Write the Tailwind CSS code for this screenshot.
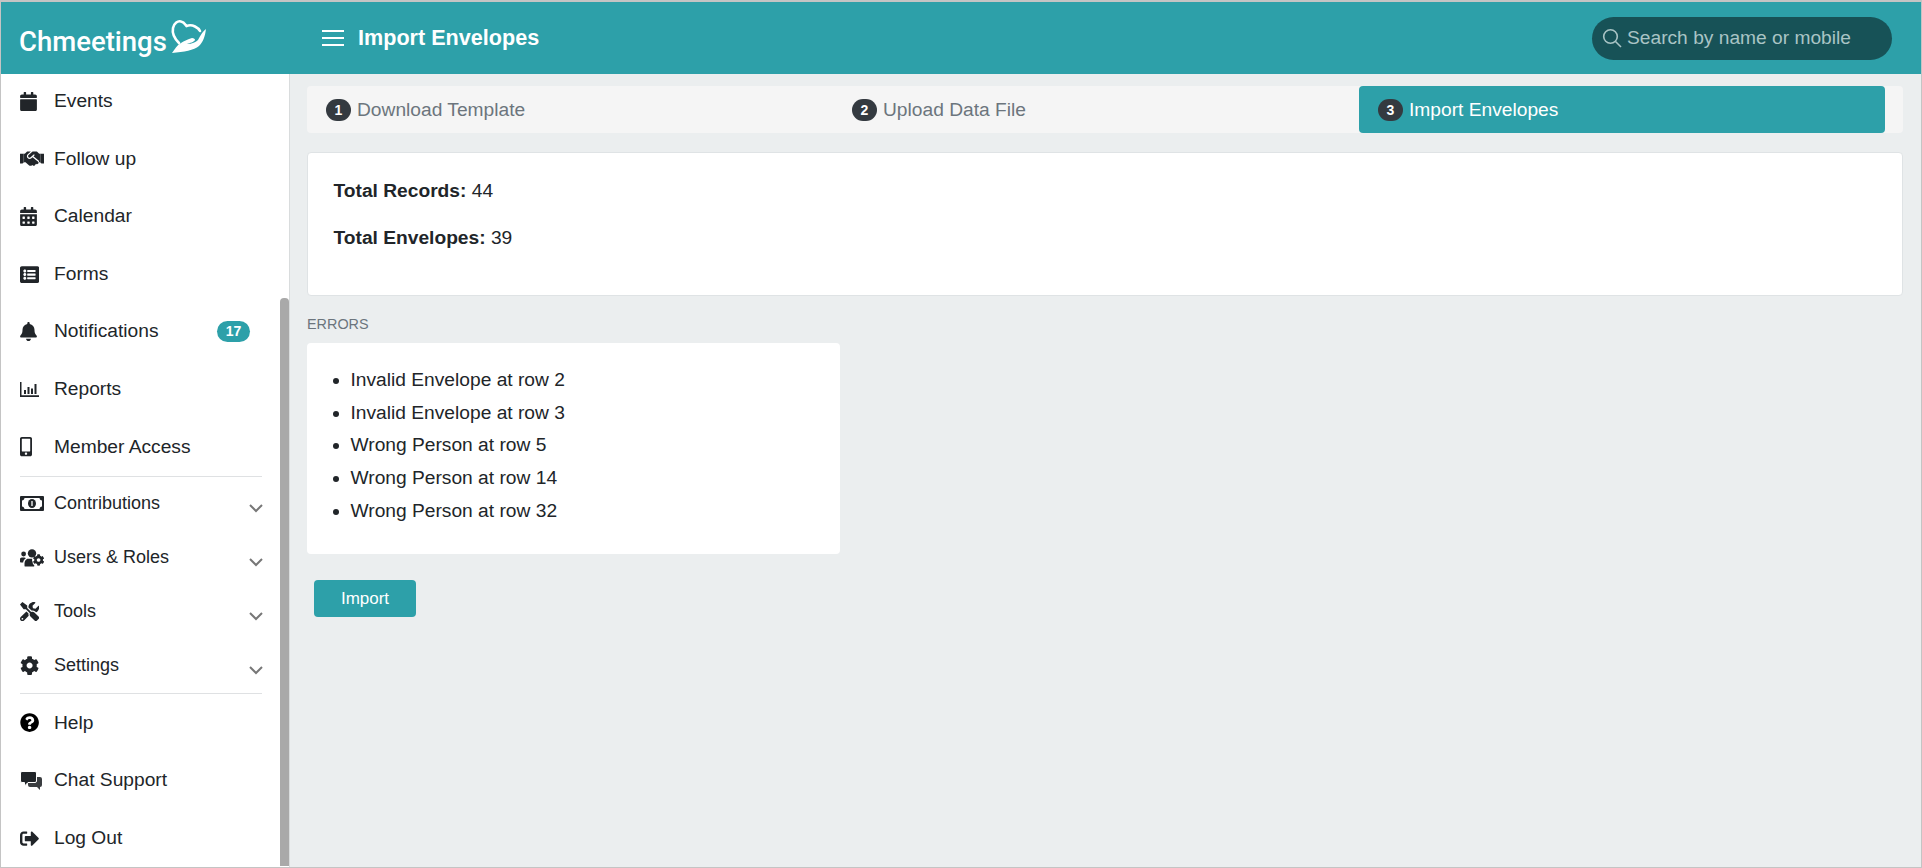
<!DOCTYPE html>
<html lang="en">
<head>
    <meta charset="UTF-8">
    <title>Import Envelopes</title>
    <script src="https://cdn.jsdelivr.net/npm/@tailwindcss/browser@4"></script>
</head>
<body class="h-[868px] overflow-hidden bg-[#ebeeef] font-['Liberation_Sans',Arial,sans-serif] text-[19.2px] text-[#212529]">
<div class="flex h-[868px] flex-col border-x border-b border-t-2 border-x-[#c4c4c4] border-b-[#c4c4c4] border-t-[#c4c4c4]">

    <!-- top bar -->
    <header class="flex h-[72px] shrink-0 items-center bg-[#2da0a9] text-white">
        <div class="flex w-[321px] shrink-0 items-center pl-[18px]">
            <span class="mt-[7px] font-['Roboto',sans-serif] text-[27.5px] font-medium">Chmeetings</span>
            <svg class="ml-[3px] mt-[-2px] h-[38px] w-[38px]" viewBox="0 0 38 38" fill="none">
                <path d="M9 25C4 20 2 15 3 10 4 5 8 2.500 11 3.500 14 4 15 6 16.500 8 19 7 22 7 25 8.500 27 9.500 29 11 30 13" stroke="#fff" stroke-width="2.6" stroke-linecap="round"/>
                <path d="M36 11C35 19 33 24 29 28 24 32 14 34 2 35 5 31 7 27 11 25 14 23 18 21 22 20 24 20 25 21 25 22 24 24 20 25 17 26 22 26 26 24 28 22 30 19 31 15 36 11z" fill="#fff"/>
            </svg>
        </div>
        <svg class="h-[18px] w-[22px]" viewBox="0 0 22 18" fill="none" stroke="#fff" stroke-width="2"><path d="M0 2h22M0 9h22M0 16h22"/></svg>
        <h1 class="ml-[14px] text-[21.6px] font-bold">Import Envelopes</h1>
        <div class="ml-auto mr-[29px] flex h-[43px] w-[300px] items-center rounded-full bg-[#175257] pl-[10px] text-[19.2px] text-[#a9c4c5]">
            <svg class="h-[20px] w-[20px]" viewBox="0 0 20 20" fill="none" stroke="#a9c4c5" stroke-width="1.6"><circle cx="8.5" cy="8.5" r="6.8"/><path d="M13.5 13.5l5.5 5.5"/></svg>
            <span class="ml-[5px]">Search by name or mobile</span>
        </div>
    </header>

    <div class="flex min-h-0 flex-1">
        <!-- sidebar -->
        <aside class="relative w-[289px] shrink-0 overflow-hidden border-r border-[#d9dcdd] bg-white">
            <nav class="-mt-[1.4px]">
                <a class="flex h-[57.6px] items-center pl-[19px]"><span class="flex w-[34px] shrink-0"><svg class="h-[19.2px] w-[17px]" viewBox="0 0 448 512" fill="#212529"><path d="M12 192h424c6.6 0 12 5.4 12 12v260c0 26.5-21.5 48-48 48H48c-26.5 0-48-21.5-48-48V204c0-6.6 5.4-12 12-12zm436-44v-36c0-26.5-21.5-48-48-48h-48V12c0-6.6-5.4-12-12-12h-40c-6.6 0-12 5.4-12 12v52H160V12c0-6.6-5.4-12-12-12h-40c-6.6 0-12 5.4-12 12v52H48C21.5 64 0 85.5 0 112v36c0 6.6 5.4 12 12 12h424c6.6 0 12-5.4 12-12z"/></svg></span>Events</a>
                <a class="flex h-[57.6px] items-center pl-[19px]"><span class="flex w-[34px] shrink-0"><svg class="h-[19.2px] w-[24px]" viewBox="0 0 640 512" fill="#212529"><path d="M96 128h36v224H96zM508 128h36v224h-36z"/><path d="M434.7 64h-85.9c-8 0-15.7 3-21.6 8.4l-98.3 90c-.1.1-.2.3-.3.4-16.6 15.6-16.3 40.5-2.1 56 12.7 13.9 39.4 17.6 56.1 2.7.1-.1.3-.1.4-.2l79.9-73.2c6.5-5.9 16.7-5.5 22.6 1 6 6.5 5.5 16.6-1 22.6l-26.1 23.9L504 313.8c2.9 2.4 5.5 5 7.9 7.7V128l-54.6-54.6c-5.9-6-14.1-9.4-22.6-9.4zM544 128.2v223.9c0 17.7 14.3 32 32 32h64V128.2h-96zM0 384h64c17.7 0 32-14.3 32-32V128.2H0V384zm483.9-45.300L334.6 217.5l-30 27.5c-29.7 27.1-75.2 24.5-101.7-4.4-26.9-29.4-24.8-74.9 4.4-101.7L289.1 64h-83.8c-8.5 0-16.6 3.4-22.6 9.4L128 128v223.9h18.3l90.5 81.9c27.4 22.3 67.7 18.1 90-9.3l.2-.2 17.9 15.5c15.9 13 39.4 10.5 52.3-5.4l31.4-38.6 5.4 4.4c13.7 11.1 33.9 9.1 45-4.7l9.5-11.7c11.2-13.8 9.1-33.9-4.6-45.1z"/></svg></span>Follow up</a>
                <a class="flex h-[57.6px] items-center pl-[19px]"><span class="flex w-[34px] shrink-0"><svg class="h-[19.2px] w-[17px]" viewBox="0 0 448 512" fill="#212529"><path d="M0 464c0 26.5 21.5 48 48 48h352c26.5 0 48-21.5 48-48V192H0v272zm320-196c0-6.6 5.4-12 12-12h40c6.6 0 12 5.4 12 12v40c0 6.6-5.4 12-12 12h-40c-6.6 0-12-5.4-12-12v-40zm0 128c0-6.6 5.4-12 12-12h40c6.6 0 12 5.4 12 12v40c0 6.6-5.4 12-12 12h-40c-6.6 0-12-5.4-12-12v-40zM192 268c0-6.6 5.4-12 12-12h40c6.6 0 12 5.4 12 12v40c0 6.6-5.4 12-12 12h-40c-6.6 0-12-5.4-12-12v-40zm0 128c0-6.6 5.4-12 12-12h40c6.6 0 12 5.4 12 12v40c0 6.6-5.4 12-12 12h-40c-6.6 0-12-5.4-12-12v-40zM64 268c0-6.6 5.4-12 12-12h40c6.6 0 12 5.4 12 12v40c0 6.6-5.4 12-12 12H76c-6.6 0-12-5.4-12-12v-40zm0 128c0-6.6 5.4-12 12-12h40c6.6 0 12 5.4 12 12v40c0 6.6-5.4 12-12 12H76c-6.6 0-12-5.4-12-12v-40zM400 64h-48V16c0-8.8-7.2-16-16-16h-32c-8.8 0-16 7.2-16 16v48H160V16c0-8.8-7.2-16-16-16h-32c-8.8 0-16 7.2-16 16v48H48C21.5 64 0 85.5 0 112v48h448v-48c0-26.5-21.5-48-48-48z"/></svg></span>Calendar</a>
                <a class="flex h-[57.6px] items-center pl-[19px]"><span class="flex w-[34px] shrink-0"><svg class="h-[19.2px] w-[19.2px]" viewBox="0 0 512 512" fill="#212529"><path d="M464 480H48c-26.51 0-48-21.49-48-48V80c0-26.51 21.49-48 48-48h416c26.51 0 48 21.49 48 48v352c0 26.51-21.49 48-48 48zM128 120c-22.091 0-40 17.909-40 40s17.909 40 40 40 40-17.909 40-40-17.909-40-40-40zm0 96c-22.091 0-40 17.909-40 40s17.909 40 40 40 40-17.909 40-40-17.909-40-40-40zm0 96c-22.091 0-40 17.909-40 40s17.909 40 40 40 40-17.909 40-40-17.909-40-40-40zm288-136v-32c0-6.627-5.373-12-12-12H204c-6.627 0-12 5.373-12 12v32c0 6.627 5.373 12 12 12h200c6.627 0 12-5.373 12-12zm0 96v-32c0-6.627-5.373-12-12-12H204c-6.627 0-12 5.373-12 12v32c0 6.627 5.373 12 12 12h200c6.627 0 12-5.373 12-12zm0 96v-32c0-6.627-5.373-12-12-12H204c-6.627 0-12 5.373-12 12v32c0 6.627 5.373 12 12 12h200c6.627 0 12-5.373 12-12z"/></svg></span>Forms</a>
                <a class="flex h-[57.6px] items-center pl-[19px]"><span class="flex w-[34px] shrink-0"><svg class="h-[19.2px] w-[17px]" viewBox="0 0 448 512" fill="#212529"><path d="M224 512c35.32 0 63.97-28.65 63.97-64H160.03c0 35.35 28.65 64 63.97 64zm215.39-149.71c-19.32-20.76-55.47-51.99-55.47-154.29 0-77.7-54.48-139.9-127.94-155.16V32c0-17.67-14.32-32-31.98-32s-31.98 14.33-31.98 32v20.84C118.56 68.1 64.08 130.3 64.08 208c0 102.3-36.15 133.53-55.47 154.29-6 6.45-8.66 14.16-8.61 21.71.11 16.4 12.98 32 32.1 32h383.8c19.12 0 32-15.6 32.1-32 .05-7.55-2.61-15.27-8.61-21.71z"/></svg></span><span class="flex-1">Notifications</span><span class="mr-[39px] flex h-[21px] w-[33px] items-center justify-center rounded-full bg-[#2da0a9] text-[14px] font-bold text-white">17</span></a>
                <a class="flex h-[57.6px] items-center pl-[19px]"><span class="flex w-[34px] shrink-0"><svg class="h-[15px] w-[19px]" viewBox="0 0 19 15" fill="#212529"><path d="M0 0h1.5v13.3H19V15H0zM4 8h2v4H4zM7.500 5h2v7h-2zM11 6.500h2V12h-2zM14.500 2h2v10h-2z"/></svg></span>Reports</a>
                <a class="flex h-[57.6px] items-center pl-[19px]"><span class="flex w-[34px] shrink-0"><svg class="h-[19.2px] w-[12px]" viewBox="0 0 320 512" fill="#212529"><path d="M272 0H48C21.5 0 0 21.5 0 48v416c0 26.5 21.5 48 48 48h224c26.5 0 48-21.5 48-48V48c0-26.5-21.5-48-48-48zM160 480c-17.7 0-32-14.3-32-32s14.3-32 32-32 32 14.3 32 32-14.3 32-32 32zm112-108c0 6.6-5.4 12-12 12H60c-6.6 0-12-5.4-12-12V60c0-6.6 5.4-12 12-12h200c6.6 0 12 5.4 12 12v312z"/></svg></span>Member Access</a>

                <div class="ml-[19px] mr-[27px] h-px bg-[#dfe1e3]"></div>

                <a class="-mt-[0.6px] flex h-[54px] items-center pl-[19px] text-[18px]"><span class="flex w-[34px] shrink-0"><svg class="h-[15px] w-[24px]" viewBox="0 0 24 15"><path fill="#212529" d="M1 0h22a1 1 0 0 1 1 1v13a1 1 0 0 1-1 1H1a1 1 0 0 1-1-1V1a1 1 0 0 1 1-1z"/><path fill="#fff" d="M4.500 2h15c.3 1.500 1 2.200 2.500 2.500v6c-1.500.3-2.200 1-2.500 2.500h-15c-.3-1.500-1-2.200-2.500-2.500v-6C3.500 4.200 4.200 3.500 4.500 2z"/><ellipse cx="12" cy="7.500" rx="4" ry="4.500" fill="#212529"/><path d="M12 5v5" stroke="#fff" stroke-width="1.300"/></svg></span><span class="flex-1">Contributions</span><svg class="mr-[26px] mt-[10px] h-[9px] w-[14px]" viewBox="0 0 14 9" fill="none" stroke="#777" stroke-width="2"><path d="M1 1l6 6 6-6"/></svg></a>
                <a class="flex h-[54px] items-center pl-[19px] text-[18px]"><span class="flex w-[34px] shrink-0"><svg class="h-[19.2px] w-[24px]" viewBox="0 0 640 512" fill="#212529"><path d="M610.500 341.300c2.600-14.100 2.600-28.500 0-42.600l25.800-14.900c3-1.700 4.300-5.200 3.300-8.500-6.700-21.600-18.200-41.200-33.200-57.400-2.300-2.500-6-3.100-9-1.400l-25.800 14.900c-10.900-9.300-23.400-16.500-36.900-21.300v-29.800c0-3.400-2.400-6.400-5.700-7.100-22.300-5-45-4.800-66.200 0-3.300.7-5.700 3.700-5.700 7.100v29.800c-13.500 4.800-26 12-36.900 21.300l-25.800-14.900c-2.900-1.700-6.700-1.100-9 1.400-15 16.200-26.500 35.800-33.200 57.400-1 3.300.4 6.800 3.300 8.500l25.800 14.900c-2.600 14.100-2.600 28.500 0 42.600l-25.800 14.900c-3 1.700-4.300 5.200-3.300 8.500 6.700 21.600 18.200 41.100 33.200 57.400 2.300 2.500 6 3.100 9 1.400l25.800-14.900c10.900 9.300 23.400 16.500 36.900 21.300v29.800c0 3.400 2.400 6.400 5.700 7.100 22.300 5 45 4.800 66.200 0 3.300-.7 5.700-3.700 5.700-7.100v-29.800c13.500-4.800 26-12 36.900-21.300l25.800 14.900c2.900 1.700 6.700 1.100 9-1.400 15-16.200 26.500-35.800 33.200-57.400 1-3.300-.4-6.800-3.300-8.500l-25.800-14.900zM496 368.500c-26.800 0-48.500-21.800-48.500-48.500s21.800-48.500 48.500-48.500 48.500 21.800 48.500 48.500-21.700 48.500-48.500 48.500z"/><circle cx="96" cy="160" r="64"/><circle cx="320" cy="144" r="112"/><path d="M48 256h64c18 0 34 7 46 19-40 22-68 62-74 109H20c-11 0-20-9-20-20v-60c0-26 22-48 48-48zM212 288h116c-14 36-6 62 10 84-4 34 8 60 42 88v20c0 10-8 16-16 16H144c-14 0-24-10-24-24v-40c0-80 42-144 92-144z"/></svg></span><span class="flex-1">Users &amp; Roles</span><svg class="mr-[26px] mt-[10px] h-[9px] w-[14px]" viewBox="0 0 14 9" fill="none" stroke="#777" stroke-width="2"><path d="M1 1l6 6 6-6"/></svg></a>
                <a class="flex h-[54px] items-center pl-[19px] text-[18px]"><span class="flex w-[34px] shrink-0"><svg class="h-[19.2px] w-[19.2px]" viewBox="0 0 512 512" fill="#212529"><path d="M501.100 395.700L384 278.600c-23.100-23.100-57.600-27.600-85.400-13.900L192 158.100V96L64 0 0 64l96 128h62.100l106.600 106.600c-13.600 27.800-9.200 62.300 13.900 85.400l117.100 117.100c14.600 14.600 38.200 14.600 52.700 0l52.700-52.700c14.500-14.600 14.500-38.200 0-52.700zM331.700 225c28.300 0 54.900 11 74.900 31l19.400 19.400c15.800-6.900 30.800-16.500 43.800-29.500 37.100-37.100 49.700-89.300 37.900-136.700-2.200-9-13.500-12.100-20.100-5.500l-74.400 74.400-67.900-11.300L334 98.900l74.400-74.400c6.600-6.600 3.400-17.900-5.700-20.200-47.400-11.700-99.600.9-136.600 37.900-28.500 28.500-41.900 66.100-41.200 103.600l82.100 82.100c8.100-1.900 16.500-2.900 24.700-2.900zm-103.900 82l-56.700-56.700L18.700 402.800c-25 25-25 65.500 0 90.500s65.500 25 90.500 0l123.600-123.600c-7.600-19.900-9.900-41.600-5-62.700zM64 472c-13.200 0-24-10.800-24-24 0-13.300 10.700-24 24-24s24 10.700 24 24c0 13.200-10.700 24-24 24z"/></svg></span><span class="flex-1">Tools</span><svg class="mr-[26px] mt-[10px] h-[9px] w-[14px]" viewBox="0 0 14 9" fill="none" stroke="#777" stroke-width="2"><path d="M1 1l6 6 6-6"/></svg></a>
                <a class="flex h-[54px] items-center pl-[19px] text-[18px]"><span class="flex w-[34px] shrink-0"><svg class="h-[19.2px] w-[19.2px]" viewBox="0 0 512 512" fill="#212529"><path d="M487.400 315.700l-42.600-24.600c4.300-23.200 4.300-47 0-70.200l42.600-24.600c4.900-2.800 7.100-8.600 5.500-14-11.100-35.600-30-67.800-54.700-94.600-3.800-4.100-10-5.100-14.800-2.300L380.800 110c-17.900-15.400-38.500-27.300-60.800-35.100V25.800c0-5.600-3.900-10.500-9.400-11.700-36.700-8.200-74.300-7.800-109.200 0-5.500 1.200-9.400 6.100-9.400 11.700V75c-22.200 7.900-42.800 19.800-60.800 35.100L88.700 85.500c-4.900-2.800-11-1.900-14.800 2.300-24.700 26.700-43.600 58.900-54.700 94.600-1.700 5.400.6 11.200 5.500 14L67.300 221c-4.300 23.200-4.300 47 0 70.200l-42.600 24.600c-4.900 2.800-7.100 8.600-5.500 14 11.100 35.600 30 67.800 54.700 94.600 3.800 4.100 10 5.100 14.800 2.300l42.600-24.600c17.900 15.400 38.500 27.300 60.800 35.100v49.200c0 5.600 3.900 10.500 9.400 11.700 36.700 8.200 74.300 7.800 109.200 0 5.500-1.200 9.400-6.100 9.400-11.700v-49.200c22.200-7.900 42.800-19.800 60.800-35.100l42.600 24.600c4.900 2.800 11 1.900 14.800-2.300 24.700-26.700 43.600-58.900 54.700-94.600 1.500-5.500-.7-11.300-5.600-14.100zM256 336c-44.100 0-80-35.900-80-80s35.900-80 80-80 80 35.900 80 80-35.900 80-80 80z"/></svg></span><span class="flex-1">Settings</span><svg class="mr-[26px] mt-[10px] h-[9px] w-[14px]" viewBox="0 0 14 9" fill="none" stroke="#777" stroke-width="2"><path d="M1 1l6 6 6-6"/></svg></a>

                <div class="ml-[19px] mr-[27px] mt-[1px] h-px bg-[#dfe1e3]"></div>

                <a class="flex h-[57.6px] items-center pl-[19px]"><span class="flex w-[34px] shrink-0"><svg class="h-[19.2px] w-[19.2px]" viewBox="0 0 512 512" fill="#000"><path d="M504 256c0 136.997-111.043 248-248 248S8 392.997 8 256C8 119.083 119.043 8 256 8s248 111.083 248 248zM262.655 90c-54.497 0-89.255 22.957-116.549 63.758-3.536 5.286-2.353 12.415 2.715 16.258l34.699 26.310c5.205 3.947 12.621 3.008 16.665-2.122 17.864-22.658 30.113-35.797 57.303-35.797 20.429 0 45.698 13.148 45.698 32.958 0 14.976-12.363 22.667-32.534 33.976C247.128 238.528 216 254.941 216 296v4c0 6.627 5.373 12 12 12h56c6.627 0 12-5.373 12-12v-1.333c0-28.462 83.186-29.647 83.186-106.667 0-58.002-60.165-102-116.531-102zM256 338c-25.365 0-46 20.635-46 46 0 25.364 20.635 46 46 46s46-20.636 46-46c0-25.365-20.635-46-46-46z"/></svg></span>Help</a>
                <a class="flex h-[57.6px] items-center pl-[19px]"><span class="flex w-[34px] shrink-0"><svg class="h-[19px] w-[22px]" viewBox="0 0 22 19"><path fill="#3a3d40" d="M10 6h10a2 2 0 0 1 2 2v6a2 2 0 0 1-2 2v3l-3-3h-7a2 2 0 0 1-2-2V8a2 2 0 0 1 2-2z"/><path fill="#212529" stroke="#fff" stroke-width="1" d="M2 .5h13A1.500 1.500 0 0 1 16.500 2v8a1.500 1.500 0 0 1-1.500 1.500H8L4.500 15v-3.500H2A1.500 1.500 0 0 1 .5 10V2A1.500 1.500 0 0 1 2 .5z"/></svg></span>Chat Support</a>
                <a class="flex h-[57.6px] items-center pl-[19px]"><span class="flex w-[34px] shrink-0"><svg class="h-[19.2px] w-[19.2px]" viewBox="0 0 512 512" fill="#212529"><path d="M497 273L329 441c-15 15-41 4.500-41-17v-96H152c-13.300 0-24-10.700-24-24v-96c0-13.300 10.700-24 24-24h136V88c0-21.400 25.900-32 41-17l168 168c9.300 9.400 9.300 24.600 0 34zM192 436v-40c0-6.600-5.400-12-12-12H96c-17.700 0-32-14.300-32-32V160c0-17.700 14.300-32 32-32h84c6.600 0 12-5.400 12-12V76c0-6.600-5.400-12-12-12H96c-53 0-96 43-96 96v192c0 53 43 96 96 96h84c6.600 0 12-5.400 12-12z"/></svg></span>Log Out</a>
            </nav>
            <!-- scrollbar thumb -->
            <div class="absolute bottom-[1px] right-0 top-[224px] w-[9px] rounded-t-[4px] bg-[#a9a9a9]"></div>
        </aside>

        <!-- main content -->
        <main class="min-w-0 flex-1 pl-[17px] pr-[18px] pt-[12px]">
            <div class="flex h-[47px] rounded-[4px] bg-[#f5f5f5] pr-[18px] text-[#6c757d]">
                <div class="flex flex-1 items-center pl-[19px] pt-[1px]"><span class="mr-[6px] flex h-[22px] w-[25px] items-center justify-center rounded-full bg-[#343a40] text-[14px] font-bold text-white">1</span>Download Template</div>
                <div class="flex flex-1 items-center pl-[19px] pt-[1px]"><span class="mr-[6px] flex h-[22px] w-[25px] items-center justify-center rounded-full bg-[#343a40] text-[14px] font-bold text-white">2</span>Upload Data File</div>
                <div class="flex flex-1 items-center rounded-[4px] bg-[#2da0a9] pl-[19px] pt-[1px] text-white"><span class="mr-[6px] flex h-[22px] w-[25px] items-center justify-center rounded-full bg-[#343a40] text-[14px] font-bold text-white">3</span>Import Envelopes</div>
            </div>

            <section class="mt-[19px] h-[144px] rounded-[4px] border border-[#dfe3e5] bg-white px-[25.5px] pt-[25px]">
                <p class="leading-[26px]"><b>Total Records:</b> 44</p>
                <p class="mt-[21px] leading-[26px]"><b>Total Envelopes:</b> 39</p>
            </section>

            <h2 class="mt-[20px] text-[14.4px] uppercase leading-[16px] text-[#6c757d]">Errors</h2>

            <section class="mt-[11px] h-[211px] w-[533px] rounded-[4px] bg-white pl-[43.5px] pt-[21px]">
                <ul class="list-disc">
                    <li class="leading-[32.7px]">Invalid Envelope at row 2</li>
                    <li class="leading-[32.7px]">Invalid Envelope at row 3</li>
                    <li class="leading-[32.7px]">Wrong Person at row 5</li>
                    <li class="leading-[32.7px]">Wrong Person at row 14</li>
                    <li class="leading-[32.7px]">Wrong Person at row 32</li>
                </ul>
            </section>

            <button class="ml-[7px] mt-[26px] h-[37px] w-[102px] rounded-[4px] bg-[#2da0a9] text-[17px] text-white">Import</button>
        </main>
    </div>
</div>
</body>
</html>
